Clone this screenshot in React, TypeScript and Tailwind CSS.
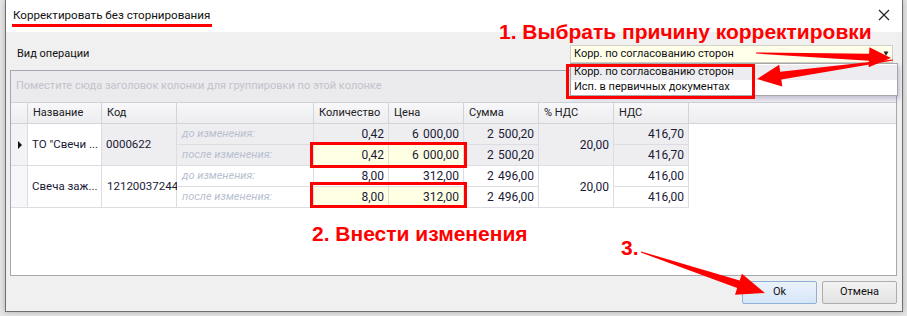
import React from "react";

type Pt = [number, number];

function arrow(x1: number, y1: number, x2: number, y2: number, tw: number, bw: number, hw: number, hl: number): string {
  const dx = x2 - x1;
  const dy = y2 - y1;
  const len = Math.sqrt(dx * dx + dy * dy);
  const ux = dx / len;
  const uy = dy / len;
  const nx = -uy;
  const ny = ux;
  const bx = x2 - ux * hl;
  const by = y2 - uy * hl;
  const pts: Pt[] = [
    [x1 + (nx * tw) / 2, y1 + (ny * tw) / 2],
    [bx + (nx * bw) / 2, by + (ny * bw) / 2],
    [bx + (nx * hw) / 2, by + (ny * hw) / 2],
    [x2, y2],
    [bx - (nx * hw) / 2, by - (ny * hw) / 2],
    [bx - (nx * bw) / 2, by - (ny * bw) / 2],
    [x1 - (nx * tw) / 2, y1 - (ny * tw) / 2],
  ];
  return pts.map((p) => `${p[0].toFixed(1)},${p[1].toFixed(1)}`).join(" ");
}

const hdr =
  "h-[21px] border-r border-b border-[#d3d3da] bg-gradient-to-b from-[#f8f8fa] to-[#ededf0] flex items-center pl-[5px] text-[#202020] overflow-hidden whitespace-nowrap";
const cellBase = "h-[21px] border-r border-b border-[#dcdce2] flex items-center overflow-hidden whitespace-nowrap";
const num = "justify-end pr-[4px] text-[12px]";
const lbl = "pl-[5px] italic text-[#b8c0d0]";
const SP = "\u2004";

export default function App() {
  return (
    <div className="relative w-[907px] h-[316px] bg-[#e6e6e6] overflow-hidden font-['Roboto',sans-serif] text-[11px] text-[#1a1a36]">
      <div className="ml-[5px] w-[898px] h-[312px] border-x border-b border-[#707070] flex flex-col bg-[#f0f0f0] shadow-[0_0_6px_rgba(0,0,0,0.25)]">
        {/* Title bar */}
        <div className="h-[32px] bg-white flex items-center justify-between pl-[7px] pr-[12px]">
          <span className="text-[11.6px] text-[#111]">Корректировать без сторнирования</span>
          <svg width="12" height="12" viewBox="0 0 12 12" className="mb-[3px]">
            <path d="M1 1 L11 11 M11 1 L1 11" stroke="#222" strokeWidth="1.2" />
          </svg>
        </div>

        {/* Operation row */}
        <div className="flex items-center justify-between pt-[13px] pl-[11px] pr-[9px]">
          <span className="text-[#111]">Вид операции</span>
          <div className="w-[323px] h-[18px] border border-[#d0d0c8] bg-[#ffffea] flex items-center justify-between pl-[3px] pr-[2px]">
            <span className="text-[#111]">Корр. по согласованию сторон</span>
            <span className="text-[8px] text-[#222] leading-none">▼</span>
          </div>
        </div>

        {/* Grid */}
        <div className="mt-[7px] ml-[4px] mr-[5px] h-[206px] border border-[#a7a7b0] bg-white flex flex-col">
          <div className="h-[32px] bg-[#ebebee] border-b border-[#d0d0d8] flex items-center pl-[5px] text-[#c2c2ca] shrink-0">
            Поместите сюда заголовок колонки для группировки по этой колонке
          </div>
          <div className="grid grid-cols-[17px_74px_75px_137px_75px_75px_75px_75px_75px_1fr] auto-rows-[21px]">
            {/* header */}
            <div className={hdr}></div>
            <div className={hdr}>Название</div>
            <div className={hdr}>Код</div>
            <div className={hdr}></div>
            <div className={hdr}>Количество</div>
            <div className={hdr}>Цена</div>
            <div className={hdr}>Сумма</div>
            <div className={hdr}>% НДС</div>
            <div className={hdr}>НДС</div>
            <div className="h-[21px] border-b border-[#d3d3da] bg-gradient-to-b from-[#f8f8fa] to-[#ededf0]"></div>

            {/* row 1 */}
            <div className="row-span-2 border-r border-b border-[#dcdce2] bg-[#f3f3f5] flex items-center justify-center">
              <span className="w-0 h-0 border-y-[4px] border-y-transparent border-l-[4px] border-l-[#111] ml-[1px]"></span>
            </div>
            <div className="row-span-2 border-r border-b border-[#dcdce2] bg-white flex items-center pl-[4px] text-[11.5px] whitespace-nowrap overflow-hidden">
              ТО "Свечи ...
            </div>
            <div className="row-span-2 border-r border-b border-[#dcdce2] bg-[#eeeef1] flex items-center pl-[4px] text-[11.5px]">0000622</div>
            <div className={`${cellBase} bg-[#eeeef1] ${lbl}`}>до изменения:</div>
            <div className={`${cellBase} ${num} bg-[#eeeef1]`}>0,42</div>
            <div className={`${cellBase} ${num} bg-[#eeeef1]`}>6{SP}000,00</div>
            <div className={`${cellBase} ${num} bg-[#eeeef1]`}>2{SP}500,20</div>
            <div className="row-span-2 border-r border-b border-[#dcdce2] bg-[#eeeef1] flex items-center justify-end pr-[4px] text-[12px]">20,00</div>
            <div className={`${cellBase} ${num} bg-[#eeeef1]`}>416,70</div>
            <div className="row-span-4 bg-white"></div>
            <div className={`${cellBase} bg-[#eeeef1] ${lbl}`}>после изменения:</div>
            <div className={`${cellBase} ${num} bg-[#ffffe4]`}>0,42</div>
            <div className={`${cellBase} ${num} bg-[#ffffe4]`}>6{SP}000,00</div>
            <div className={`${cellBase} ${num} bg-[#eeeef1]`}>2{SP}500,20</div>
            <div className={`${cellBase} ${num} bg-[#eeeef1]`}>416,70</div>

            {/* row 2 */}
            <div className="row-span-2 border-r border-b border-[#dcdce2] bg-[#f7f7f9]"></div>
            <div className="row-span-2 border-r border-b border-[#dcdce2] bg-white flex items-center pl-[4px] text-[11.5px] whitespace-nowrap overflow-hidden">
              Свеча заж...
            </div>
            <div className="row-span-2 border-r border-b border-[#dcdce2] bg-white flex items-center pl-[5px] text-[11.5px]">12120037244</div>
            <div className={`${cellBase} bg-white ${lbl}`}>до изменения:</div>
            <div className={`${cellBase} ${num} bg-white`}>8,00</div>
            <div className={`${cellBase} ${num} bg-white`}>312,00</div>
            <div className={`${cellBase} ${num} bg-white`}>2{SP}496,00</div>
            <div className="row-span-2 border-r border-b border-[#dcdce2] bg-white flex items-center justify-end pr-[4px] text-[12px]">20,00</div>
            <div className={`${cellBase} ${num} bg-white`}>416,00</div>
            <div className={`${cellBase} bg-white ${lbl}`}>после изменения:</div>
            <div className={`${cellBase} ${num} bg-[#ffffe4]`}>8,00</div>
            <div className={`${cellBase} ${num} bg-[#ffffe4]`}>312,00</div>
            <div className={`${cellBase} ${num} bg-white`}>2{SP}496,00</div>
            <div className={`${cellBase} ${num} bg-white`}>416,00</div>
          </div>
        </div>

        {/* Buttons */}
        <div className="mt-[5px] flex justify-end gap-[5px] pr-[5px]">
          <div className="w-[75px] h-[23px] rounded-[2px] border border-[#8fb0d6] bg-gradient-to-b from-[#eaf3fc] to-[#d6e6f7] flex items-center justify-center text-[#111]">
            Ok
          </div>
          <div className="w-[75px] h-[23px] rounded-[2px] border border-[#adadad] bg-gradient-to-b from-[#f3f3f3] to-[#e3e3e3] flex items-center justify-center text-[#111]">
            Отмена
          </div>
        </div>
      </div>

      {/* Dropdown list (overlay) */}
      <div className="absolute left-[570px] top-[63px] w-[328px] h-[33px] border border-[#a8a8a8] bg-white shadow-[2px_3px_4px_rgba(90,70,140,0.25)] flex flex-col pt-[1px]">
        <div className="h-[15px] bg-[#ededf1] flex items-center pl-[3px] text-[#111]">Корр. по согласованию сторон</div>
        <div className="h-[15px] flex items-center pl-[3px] text-[#111]">Исп. в первичных документах</div>
      </div>

      {/* Annotations */}
      <div className="absolute left-[12px] top-[24px] w-[200px] h-[3px] bg-[#ff0000]"></div>
      <div className="absolute left-[566px] top-[64px] w-[189px] h-[35px] border-[3px] border-[#ff0000]"></div>
      <div className="absolute left-[310px] top-[142px] w-[157px] h-[26px] border-[3px] border-[#ff0000]"></div>
      <div className="absolute left-[310px] top-[182px] w-[157px] h-[26px] border-[3px] border-[#ff0000]"></div>

      <div className="absolute left-[499px] top-[21px] font-['Liberation_Sans',Arial,sans-serif] font-bold text-[21px] leading-none text-[#ff0000] whitespace-nowrap">
        1. Выбрать причину корректировки
      </div>
      <div className="absolute left-[312px] top-[223px] font-['Liberation_Sans',Arial,sans-serif] font-bold text-[21px] leading-none text-[#ff0000] whitespace-nowrap">
        2. Внести изменения
      </div>
      <div className="absolute left-[621px] top-[237px] font-['Liberation_Sans',Arial,sans-serif] font-bold text-[21px] leading-none text-[#ff0000] whitespace-nowrap">
        3.
      </div>

      <svg className="absolute left-0 top-0 pointer-events-none" width="907" height="316" viewBox="0 0 907 316">
        <polygon points={arrow(756, 53, 891, 58, 1, 7, 20, 22)} fill="#ff0000" />
        <polygon points={arrow(893, 60, 757, 79, 1, 8, 22, 24)} fill="#ff0000" />
        <polygon points={arrow(641, 252, 765, 293, 1, 8, 22, 28)} fill="#ff0000" />
      </svg>
    </div>
  );
}
